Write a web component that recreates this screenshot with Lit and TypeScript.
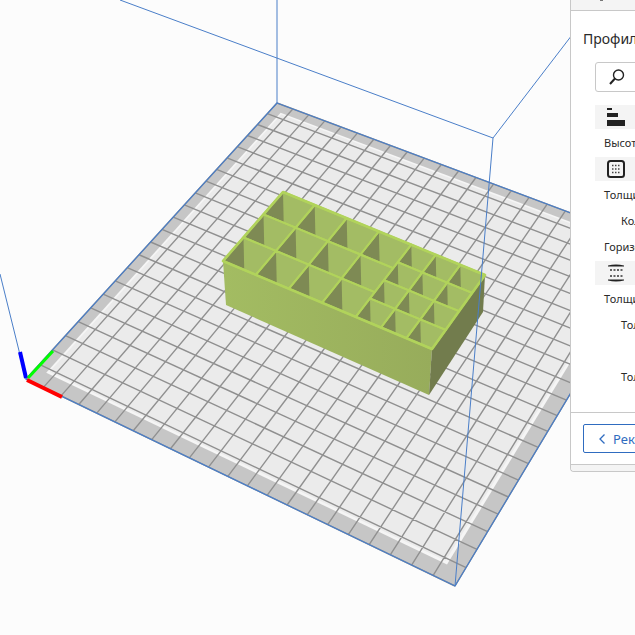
import { LitElement, html, css, svg } from "lit";
import { customElement } from "lit/decorators.js";

type P = [number, number];

// projective map from the unit square onto a quad (a=0,0 b=1,0 c=1,1 d=0,1)
function quadMap(a: P, b: P, c: P, d: P) {
  const dx1 = b[0] - c[0], dx2 = d[0] - c[0], sx = a[0] - b[0] + c[0] - d[0];
  const dy1 = b[1] - c[1], dy2 = d[1] - c[1], sy = a[1] - b[1] + c[1] - d[1];
  const den = dx1 * dy2 - dx2 * dy1;
  const g = (sx * dy2 - dx2 * sy) / den;
  const h = (dx1 * sy - sx * dy1) / den;
  return (u: number, v: number): P => {
    const w = g * u + h * v + 1;
    return [
      (b[0] - a[0] + g * b[0]) * u / w + (d[0] - a[0] + h * d[0]) * v / w + a[0] / w,
      (b[1] - a[1] + g * b[1]) * u / w + (d[1] - a[1] + h * d[1]) * v / w + a[1] / w,
    ];
  };
}

const pts = (list: P[]) => list.map((p) => `${p[0].toFixed(1)},${p[1].toFixed(1)}`).join(" ");

const CELLS = 22;
const plate = quadMap([277, 103], [659, 246], [455, 586], [26, 379]);
// u: long side from left corner to front corner, v: short side from left to back
const boxTop = quadMap([223, 261], [432, 349], [485, 275], [283, 192]);

const columns = [0, 0.16, 0.32, 0.48, 0.64, 0.76, 0.88, 1];
const WALL_H = 44;

function cellsFor(u0: number, u1: number, rows: number) {
  const out = [];
  for (let r = 0; r < rows; r++) {
    const v0 = r / rows, v1 = (r + 1) / rows;
    out.push({
      a: boxTop(u0, v0), // left
      b: boxTop(u0, v1), // back
      c: boxTop(u1, v1), // right
      d: boxTop(u1, v0), // front
    });
  }
  return out;
}

const allCells = columns.slice(0, -1).flatMap((u, i) => cellsFor(u, columns[i + 1], i < 4 ? 3 : 4));

@customElement("app-root")
export class AppRoot extends LitElement {
  static styles = css`
    :host {
      display: block;
      position: relative;
      width: 635px;
      height: 635px;
      overflow: hidden;
      background: #fcfcfc;
      font-family: "Noto Sans", sans-serif;
    }
    .scene {
      display: block;
    }
    .panel {
      position: absolute;
      left: 570px;
      top: 0;
      width: 300px;
      height: 472px;
      box-sizing: border-box;
      display: flex;
      flex-direction: column;
      background: #fff;
      border-left: 1px solid #c8c8c8;
      border-bottom: 1px solid #c8c8c8;
      border-bottom-left-radius: 4px;
      color: #2a2a2a;
      font-size: 11px;
      white-space: nowrap;
    }
    .head {
      height: 10px;
      flex: none;
      background: #f4f4f4;
      border-bottom: 1px solid #c8c8c8;
    }
    .head i {
      display: block;
      width: 3px;
      height: 1px;
      margin-left: 29px;
      background: #777;
    }
    .body {
      flex: 1;
      padding: 18px 0 0 12px;
    }
    .title {
      font-size: 14px;
      line-height: 20px;
      margin-bottom: 13px;
    }
    .search {
      width: 260px;
      height: 30px;
      margin-left: 12px;
      box-sizing: border-box;
      border: 1px solid #c8c8c8;
      border-radius: 3px;
      display: flex;
      align-items: center;
      padding-left: 12px;
      margin-bottom: 13px;
    }
    .band {
      height: 24px;
      margin-left: 12px;
      background: #f4f4f4;
      display: flex;
      align-items: center;
      padding-left: 12px;
    }
    .row {
      padding-left: 21px;
    }
    .sub {
      padding-left: 38px;
    }
    .h28 {
      height: 28px;
      line-height: 28px;
    }
    .h27 {
      height: 27px;
      line-height: 28px;
    }
    .h27b {
      height: 27px;
      line-height: 26px;
    }
    .h26 {
      height: 26px;
      line-height: 26px;
    }
    .h26b {
      height: 26px;
      line-height: 24px;
    }
    .gap {
      height: 26px;
    }
    .foot {
      height: 52px;
      flex: none;
      box-sizing: border-box;
      border-top: 1px solid #c8c8c8;
      padding: 11px 0 0 12px;
    }
    .btn {
      width: 260px;
      height: 29px;
      box-sizing: border-box;
      border: 1px solid #2f6cc0;
      border-radius: 2px;
      display: flex;
      align-items: center;
      gap: 7px;
      padding-left: 14px;
      color: #2f6cc0;
      font-size: 13px;
    }
    .strip {
      height: 6px;
      flex: none;
      background: #f4f4f4;
      border-top: 1px solid #c8c8c8;
      border-bottom-left-radius: 4px;
    }
  `;

  private renderPlate() {
    const ring = 1 / CELLS;
    let grid = "";
    for (let i = 0; i <= CELLS; i++) {
      const t = i / CELLS;
      const a = plate(t, 0), b = plate(t, 1), c = plate(0, t), d = plate(1, t);
      grid += `M${a[0]} ${a[1]}L${b[0]} ${b[1]}M${c[0]} ${c[1]}L${d[0]} ${d[1]}`;
    }
    // gray rim is wider on the two sides nearest the camera
    const inner = (k: number): P[] => {
      const u0 = k * 0.9, u1 = 1 - k * 1.15, v0 = k * 0.9, v1 = 1 - k * 1.15;
      return [plate(u0, v0), plate(u1, v0), plate(u1, v1), plate(u0, v1)];
    };
    const edge: P[] = [plate(0, 0), plate(1, 0), plate(1, 1), plate(0, 1)];
    return svg`
      <polygon points=${pts(edge)} fill="#c6c6c6"></polygon>
      <polygon points=${pts(inner(ring * 0.65))} fill="#f5f5f5"></polygon>
      <polygon points=${pts(inner(ring * 0.76))} fill="#ebebeb"></polygon>
      <path d=${grid} fill="none" stroke="#909090" stroke-width="1.4"></path>
      <polygon points=${pts(edge)} fill="none" stroke="#4a7ec8" stroke-width="1.2"></polygon>
    `;
  }

  private renderBox() {
    const left: P = [223, 261], front: P = [432, 349], right: P = [485, 275];
    return svg`
      <defs>
        <linearGradient id="side" x1="0" y1="0" x2="1" y2="0">
          <stop offset="0" stop-color="#a3bc62"></stop>
          <stop offset="1" stop-color="#97ac5b"></stop>
        </linearGradient>
        ${allCells.map((c, i) => svg`<clipPath id=${"cell" + i}><polygon points=${pts([c.a, c.b, c.c, c.d])}></polygon></clipPath>`)}
      </defs>
      <polygon points=${pts([left, front, [429, 395], [226, 305]])} fill="url(#side)"></polygon>
      <polygon points=${pts([front, right, [483, 312], [429, 395]])} fill="#727c4d"></polygon>
      ${allCells.map((c, i) => {
        const bDown: P = [c.b[0] + 1, c.b[1] + WALL_H];
        const aDown: P = [c.a[0] + 1, c.a[1] + WALL_H];
        return svg`
          <g clip-path=${`url(#cell${i})`}>
            <polygon points=${pts([c.a, c.b, c.c, c.d])} fill="#a3bc64"></polygon>
            <polygon points=${pts([c.a, c.b, bDown, aDown])} fill="#7e8a54"></polygon>
          </g>`;
      })}
      ${allCells.map(
        (c) => svg`<polygon points=${pts([c.a, c.b, c.c, c.d])} fill="none" stroke="#b1d35b" stroke-width="2" stroke-linejoin="round"></polygon>`,
      )}
      <polygon points=${pts([boxTop(0, 0), boxTop(1, 0), boxTop(1, 1), boxTop(0, 1)])} fill="none" stroke="#b1d35b" stroke-width="2.6" stroke-linejoin="round"></polygon>
    `;
  }

  render() {
    return html`
      <svg class="scene" width="635" height="635" viewBox="0 0 635 635">
        ${this.renderPlate()}
        ${this.renderBox()}
        <g fill="none" stroke="#4a7ec8" stroke-width="1">
          <path d="M120 0L493 138M277 0V103M493 138L572 35M493 138L455 586M0 274L26 379"></path>
        </g>
        <path d="M20 352L26 378" stroke="#0000ff" stroke-width="4"></path>
        <path d="M28 378L53 351" stroke="#00ff00" stroke-width="3"></path>
        <path d="M27 380L62 397" stroke="#ff0000" stroke-width="4"></path>
      </svg>
      <div class="panel">
        <div class="head"><i></i></div>
        <div class="body">
          <div class="title">Профиль</div>
          <div class="search">
            <svg width="18" height="18" viewBox="0 0 18 18" fill="none" stroke="#222">
              <circle cx="10.5" cy="7" r="5" stroke-width="1.4"></circle>
              <path d="M7 10.5L2 16" stroke-width="2"></path>
            </svg>
          </div>
          <div class="band">
            <svg width="18" height="18" viewBox="0 0 18 18" fill="#222">
              <rect x="0" y="0" width="5" height="2"></rect>
              <rect x="0" y="5" width="11" height="4"></rect>
              <rect x="0" y="12" width="18" height="6"></rect>
            </svg>
          </div>
          <div class="row h28">Высота слоя</div>
          <div class="band">
            <svg width="18" height="18" viewBox="0 0 18 18">
              <rect x="1" y="1" width="16" height="16" rx="2.5" fill="none" stroke="#222" stroke-width="2"></rect>
              <path d="M5 5.5H13M5 9H13M5 12.5H13" stroke="#444" stroke-width="1.5" stroke-dasharray="1.5 1.5"></path>
            </svg>
          </div>
          <div class="row h27">Толщина стенки</div>
          <div class="row sub h26">Количество линий</div>
          <div class="row h27b">Горизонтальное</div>
          <div class="band">
            <svg width="18" height="18" viewBox="0 0 18 18">
              <path d="M1 1.5Q9 -0.5 17 1.5V2.5H1ZM1 15.5H17V16.5Q9 18.5 1 16.5Z" fill="#222"></path>
              <path d="M3 6H16M3 12H16" stroke="#333" stroke-width="1.5" stroke-dasharray="2 1.5"></path>
            </svg>
          </div>
          <div class="row h28">Толщина дна и крышки</div>
          <div class="row sub h26b">Толщина крышки</div>
          <div class="gap"></div>
          <div class="row sub h26b">Толщина дна</div>
        </div>
        <div class="foot">
          <div class="btn">
            <svg width="8" height="12" viewBox="0 0 8 12" fill="none" stroke="#2f6cc0" stroke-width="1.3">
              <path d="M6.5 1.5L2 6L6.5 10.5"></path>
            </svg>
            <span>Рекомендованный</span>
          </div>
        </div>
        <div class="strip"></div>
      </div>
    `;
  }
}
